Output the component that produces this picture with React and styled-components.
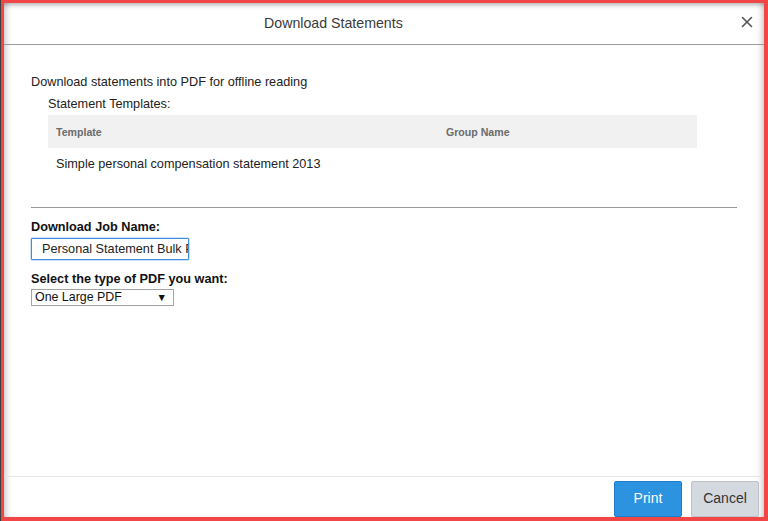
import React from "react";
import styled, { createGlobalStyle } from "styled-components";

const Global = createGlobalStyle`
  html, body { margin: 0; padding: 0; background: #3d3d3d; }
  body { font-family: Arial, "Liberation Sans", sans-serif; }
  * { box-sizing: border-box; }
`;

const Page = styled.div`
  width: 768px;
  height: 521px;
  padding-left: 1px;
  background: #3d3d3d;
`;

const Frame = styled.div`
  width: 767px;
  height: 521px;
  border-style: solid;
  border-color: #f24646;
  border-width: 3px 4px 4px 3px;
  background: #fff;
  display: flex;
  flex-direction: column;
  box-shadow: inset 0 5px 5px -3px rgba(0, 0, 0, 0.28),
    inset 6px 0 6px -4px rgba(0, 0, 0, 0.22),
    inset -6px 0 6px -4px rgba(0, 0, 0, 0.22);
  color: #222;
`;

const Header = styled.div`
  height: 42px;
  flex: none;
  border-bottom: 1px solid #9a9a9a;
  display: flex;
  align-items: center;
  padding: 0 11px 2px 260px;
`;

const Title = styled.div`
  flex: 1;
  font-size: 14.2px;
  color: #3a3a3a;
`;

const Close = styled.button`
  width: 12px;
  height: 12px;
  padding: 0;
  border: 0;
  background: none;
  display: flex;
  margin-top: -2px;
`;

const Body = styled.div`
  flex: 1;
  padding: 29px 27px 0 27px;
  font-size: 12.7px;
  line-height: 16px;
`;

const Intro = styled.div``;

const Templates = styled.div`
  padding-left: 17px;
  margin-top: 6px;
`;

const Table = styled.div`
  width: 649px;
  margin-top: 3px;
`;

const Row = styled.div`
  display: grid;
  grid-template-columns: 390px 1fr;
  align-items: center;
  height: ${(p) => (p.$head ? "33px" : "31px")};
  background: ${(p) => (p.$head ? "#f1f1f1" : "transparent")};
  padding-left: 8px;
  font-size: ${(p) => (p.$head ? "10.6px" : "12.7px")};
  font-weight: ${(p) => (p.$head ? "bold" : "normal")};
  color: ${(p) => (p.$head ? "#6b6b6b" : "#222")};
`;

const Divider = styled.hr`
  margin: 28px 0 0;
  border: 0;
  border-top: 1px solid #9a9a9a;
  height: 0;
`;

const Label = styled.div`
  font-weight: bold;
  margin-top: ${(p) => p.$mt}px;
  color: #111;
`;

const TextInput = styled.input`
  display: block;
  width: 158px;
  height: 22px;
  margin-top: 3px;
  border: 1px solid #3d8fe0;
  box-shadow: 0 0 0 0.5px rgba(61, 143, 224, 0.5);
  border-radius: 1px;
  padding: 0 0 0 10px;
  font-family: Arial, "Liberation Sans", sans-serif;
  font-size: 12.7px;
  color: #222;
  outline: none;
`;

const Select = styled.div`
  width: 143px;
  height: 17px;
  margin-top: 2px;
  border: 1px solid #a3a3a3;
  display: flex;
  align-items: center;
  justify-content: space-between;
  padding: 0 6px 0 3px;
  font-size: 12.4px;
  line-height: 15px;
  color: #111;
`;

const Arrow = styled.span`
  font-size: 10.5px;
  line-height: 1;
`;

const Footer = styled.div`
  flex: none;
  border-top: 1px solid #e6e6e6;
  padding: 4px 5px 0 0;
  display: flex;
  justify-content: flex-end;
  gap: 9px;
`;

const Button = styled.button`
  width: 68px;
  height: 36px;
  border-radius: 2px;
  font-family: Arial, "Liberation Sans", sans-serif;
  font-size: 14px;
  border: 1px solid ${(p) => (p.$primary ? "#1f7fcc" : "#bcc2c8")};
  background: ${(p) => (p.$primary ? "#2b93e0" : "#d3d9df")};
  color: ${(p) => (p.$primary ? "#fff" : "#333")};
  padding: 0 0 2px;
`;

export default function App() {
  return (
    <Page>
      <Global />
      <Frame>
        <Header>
          <Title>Download Statements</Title>
          <Close aria-label="Close">
            <svg width="12" height="12" viewBox="0 0 12 12">
              <path d="M1.5 1.5 L10.5 10.5 M10.5 1.5 L1.5 10.5" stroke="#555" strokeWidth="1.6" strokeLinecap="round" />
            </svg>
          </Close>
        </Header>
        <Body>
          <Intro>Download statements into PDF for offline reading</Intro>
          <Templates>
            Statement Templates:
            <Table>
              <Row $head>
                <span>Template</span>
                <span>Group Name</span>
              </Row>
              <Row>
                <span>Simple personal compensation statement 2013</span>
                <span />
              </Row>
            </Table>
          </Templates>
          <Divider />
          <Label $mt={11}>Download Job Name:</Label>
          <TextInput defaultValue="Personal Statement Bulk Print" />
          <Label $mt={11}>Select the type of PDF you want:</Label>
          <Select>
            <span>One Large PDF</span>
            <Arrow>▼</Arrow>
          </Select>
        </Body>
        <Footer>
          <Button $primary>Print</Button>
          <Button>Cancel</Button>
        </Footer>
      </Frame>
    </Page>
  );
}
